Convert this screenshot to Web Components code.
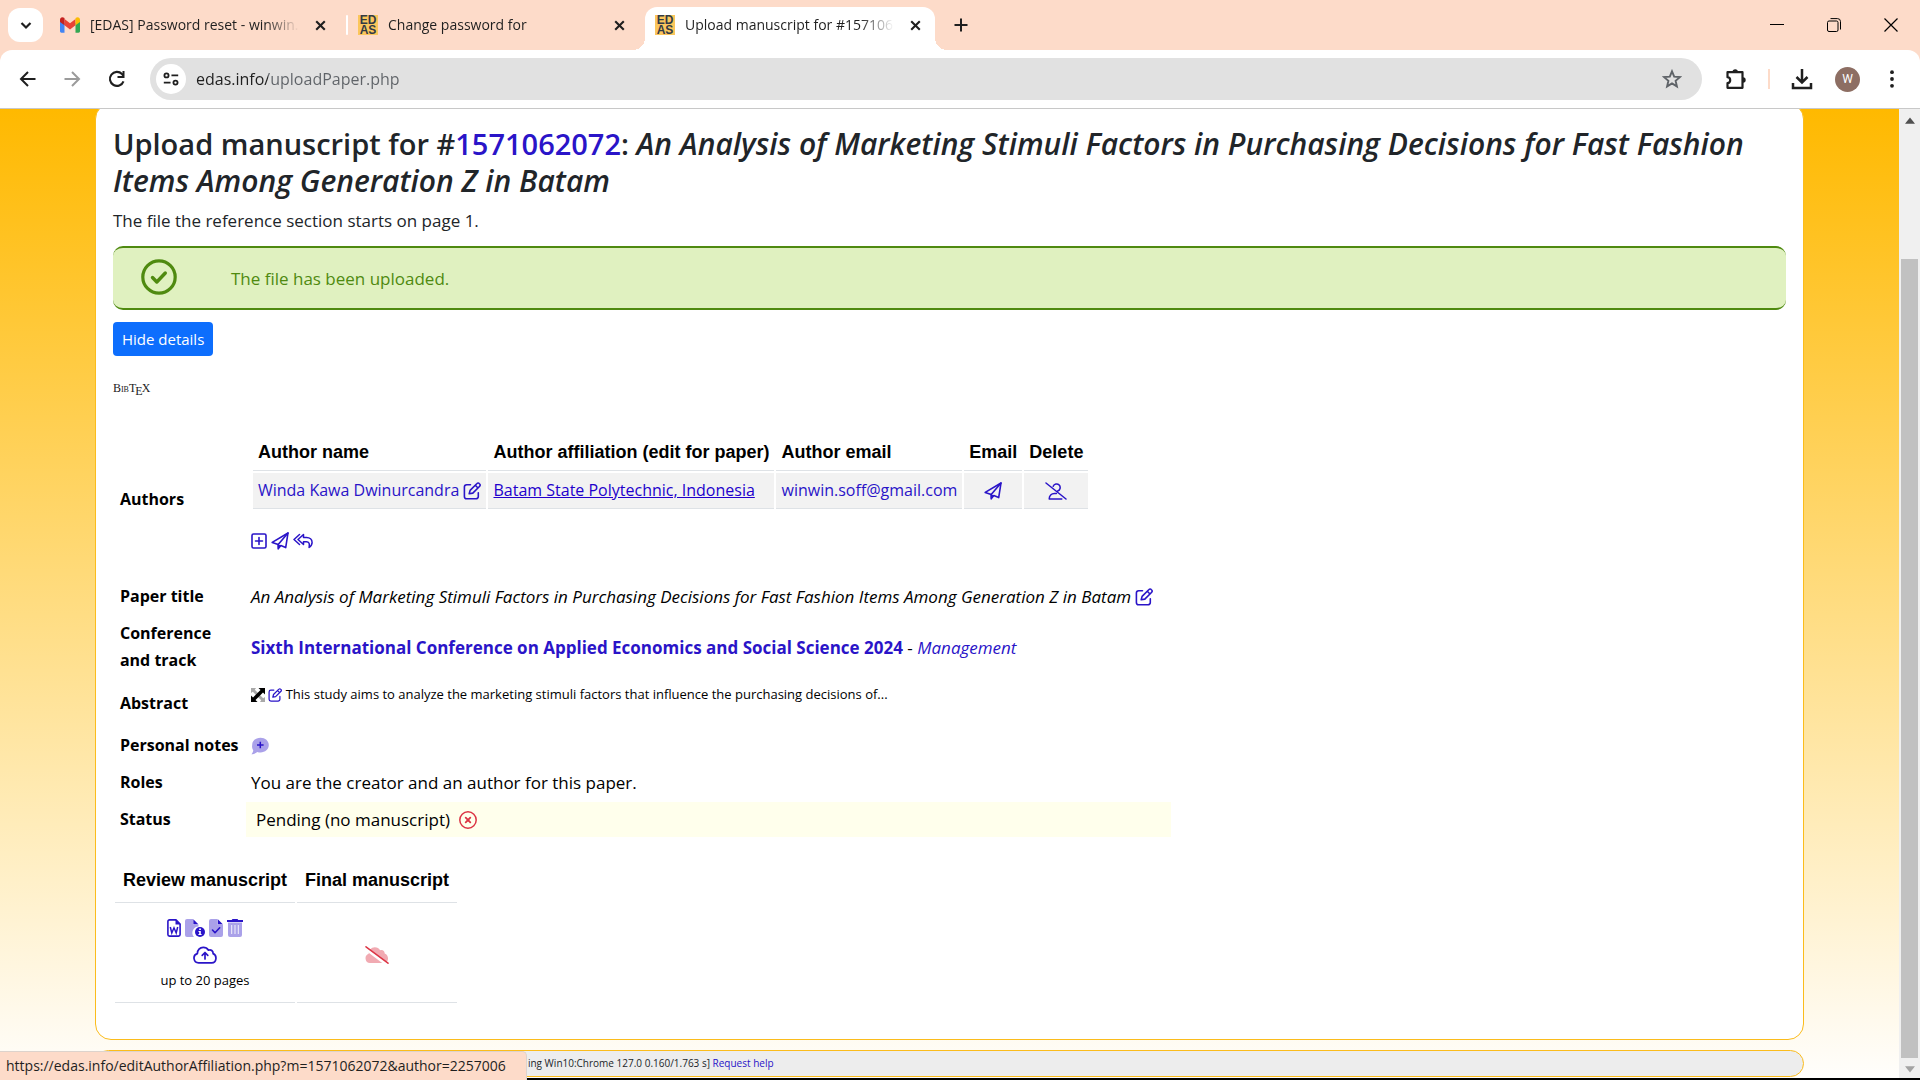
<!DOCTYPE html>
<html lang="en">
<head>
<meta charset="utf-8">
<title>Upload manuscript for #1571062072</title>
<style>
  html, body { margin: 0; height: 100%; }
  body { font-family: "Open Sans", "Noto Sans", sans-serif; font-size: 17px; line-height: 27px; color: #000; --link: #2a14c8; overflow: hidden; }
  [slot="title"] i { font-size: 30px; }
</style>
</head>
<body>
<browser-window>
  <tab-strip slot="tabs">
    <browser-tab icon="gmail" style="--tab-width: 296px">[EDAS] Password reset - winwin.</browser-tab>
    <browser-tab icon="edas" divided style="--tab-width: 299px">Change password for</browser-tab>
    <browser-tab icon="edas" active style="--tab-width: 290px">Upload manuscript for #157106</browser-tab>
  </tab-strip>
  <address-bar slot="toolbar" url="edas.info/uploadPaper.php"></address-bar>
  <paper-page>
    <span slot="title">Upload manuscript for #<paper-link>1571062072</paper-link>: <i>An Analysis of Marketing Stimuli Factors in Purchasing Decisions for Fast Fashion Items Among Generation Z in Batam</i></span>
    <status-alert>The file has been uploaded.</status-alert>
    <details-toggle>Hide details</details-toggle>
    <bibtex-link></bibtex-link>
    <detail-list>
      <detail-row label="Authors"><author-table></author-table></detail-row>
      <detail-row label="Paper title"><i>An Analysis of Marketing Stimuli Factors in Purchasing Decisions for Fast Fashion Items Among Generation Z in Batam</i> <paper-link label="Edit title"><ui-icon name="edit"></ui-icon></paper-link></detail-row>
      <detail-row label="Conference and track" wrap><b><paper-link>Sixth International Conference on Applied Economics and Social Science 2024</paper-link></b> - <i><paper-link>Management</paper-link></i></detail-row>
      <detail-row label="Abstract" small><ui-icon name="expand" size="14"></ui-icon> <paper-link label="Edit abstract"><ui-icon name="edit" size="14"></ui-icon></paper-link> This study aims to analyze the marketing stimuli factors that influence the purchasing decisions of...</detail-row>
      <detail-row label="Personal notes"><paper-link label="Add note"><ui-icon name="note"></ui-icon></paper-link></detail-row>
      <detail-row label="Roles">You are the creator and an author for this paper.</detail-row>
      <detail-row label="Status" highlight>Pending (no manuscript)&nbsp; <ui-icon name="cross"></ui-icon></detail-row>
    </detail-list>
    <manuscript-table></manuscript-table>
  </paper-page>
  <link-preview slot="preview">https://edas.info/editAuthorAffiliation.php?m=1571062072&amp;author=2257006</link-preview>
</browser-window>

<script>
const define = (name, html) => customElements.define(name, class extends HTMLElement {
  constructor() { super(); this.attachShadow({ mode: "open" }); }
  connectedCallback() {
    this.shadowRoot.innerHTML = typeof html === "function" ? html(this) : html;
  }
});

/* ---------- icons: [viewBox width, viewBox height, markup] ---------- */
const S = 'fill="none" stroke="currentColor" stroke-linecap="round" stroke-linejoin="round"';
const L = 'fill="none" stroke="currentColor" stroke-linecap="butt" stroke-linejoin="miter"';
const ICONS = {
  chevron: [20, 20, `<path ${L} stroke-width="2.2" d="M5.5 8l4.5 4.5L14.5 8"/>`],
  gmail: [20, 16, `<path fill="#4285f4" d="M0 3v11.3c0 .8.6 1.4 1.4 1.4H4.5V6z"/><path fill="#34a853" d="M20 3v11.3c0 .8-.6 1.4-1.4 1.4H15.5V6z"/><path fill="#ea4335" d="M4.5 2l5.5 4.2L15.5 2v6.3L10 12.5 4.5 8.3z"/><path fill="#c5221f" d="M0 2.5C0 .3 2.4-.7 4.5 1v7.3L0 5z"/><path fill="#fbbc04" d="M20 2.5c0-2.2-2.4-3.2-4.5-1.5v7.3L20 5z"/>`],
  close: [20, 20, `<path ${L} stroke-width="2.2" d="M5.5 5.5l9 9M14.5 5.5l-9 9"/>`],
  plus: [20, 20, `<path ${L} stroke-width="2" d="M10 3.5v13M3.5 10h13"/>`],
  back: [20, 20, `<path ${L} stroke-width="2" d="M17.500 10H3.500M10 3L3 10l7 7"/>`],
  forward: [20, 20, `<path ${L} stroke-width="2" d="M2.500 10h14M10 3l7 7-7 7"/>`],
  reload: [20, 20, `<path ${L} stroke-width="2.1" d="M17.500 12.300A7 7 0 1 1 16 5l1.300 1.500"/><path fill="currentColor" d="M18.500 2v7h-7V7h5V2z"/>`],
  tune: [20, 20, `<g ${L} stroke-width="2"><circle cx="5" cy="6" r="2.3"/><path d="M10.500 6H18M2 14h7.500"/><circle cx="15" cy="14" r="2.3"/></g>`],
  star: [20, 20, `<path ${L} stroke-width="1.9" d="M10 2.300l2.200 5.300 5.700.5-4.300 3.700 1.300 5.600-4.900-3-4.900 3 1.300-5.600L2.100 8.100l5.700-.5z"/>`],
  puzzle: [22, 22, `<path ${S} stroke-width="2.2" d="M2.500 4.200h15v15.600h-15v-4.600c3.600-.5 3.600-5.500 0-6z"/><path fill="currentColor" d="M7.500 4a2.700 2.700 0 0 1 5.400 0zM18 9.300a2.700 2.700 0 0 1 0 5.400z"/>`],
  download: [22, 22, `<path ${L} stroke-width="2.5" d="M11 1v13M5.500 9l5.500 5.500L16.500 9M2 15v5h18v-5"/>`],
  dots: [20, 20, `<g fill="currentColor"><circle cx="10" cy="3.200" r="1.900"/><circle cx="10" cy="10" r="1.900"/><circle cx="10" cy="16.800" r="1.900"/></g>`],
  minimize: [14, 14, `<path stroke="currentColor" d="M0 6.500h14"/>`],
  restore: [14, 14, `<rect x=".5" y="3" width="10.500" height="10.500" rx="1.500" fill="none" stroke="currentColor"/><path fill="none" stroke="currentColor" d="M3.500.6h7A3 3 0 0 1 13.500 3.500v8"/>`],
  quit: [14, 14, `<path stroke="currentColor" stroke-width="1.200" d="M.5.500l13 13M13.500.500l-13 13"/>`],
  check: [36, 36, `<g ${S}><circle cx="18" cy="18" r="16.200" stroke-width="3.200"/><path stroke-width="3.400" d="M11.500 18.500l4.300 4.500 8.500-9"/></g>`],
  edit: [18, 18, `<g ${S} stroke-width="1.600"><path d="M7.500 2.700H3.700A2.300 2.300 0 0 0 1.400 5v9.500a2.300 2.300 0 0 0 2.300 2.300H13a2.300 2.300 0 0 0 2.300-2.300v-3.700"/><path d="M6.200 11.800l.9-3.400 6.900-6.900a1.500 1.500 0 0 1 2.200 0l.5.500a1.500 1.500 0 0 1 0 2.200l-6.900 6.900zM12.300 3.300l2.700 2.700"/></g>`],
  send: [18, 18, `<g ${S} stroke-width="1.600"><path d="M1.200 10.400L17 1l-2.300 14.600-4.900-2.100-2.600 3.300v-4.300z"/><path d="M17 1L7.200 12.500"/></g><path fill="currentColor" d="M6.500 12l3.600 1.600L7 17.600z"/>`],
  userslash: [22, 18, `<g ${S} stroke-width="1.500"><path d="M8.200 4.300a3.600 3.600 0 1 1 4.500 4.700M4.200 16.900c0-3.300 2.200-5.400 5.200-5.400h2M4.200 16.900h12.600M1 1l20 16"/></g>`],
  addbox: [16, 16, `<g ${S} stroke-width="1.600"><rect x="1" y="1" width="14" height="14" rx="1.500"/><path d="M4.500 8h7M8 4.500v7"/></g>`],
  replyall: [20, 16, `<g ${S} stroke-width="1.500"><path d="M6.500 1.500L1 6.500l5.500 5M10.500 1.500L5 6.500l5.500 5V8.700h3c2.300 0 3.300 1.500 2.600 5.700 2-1.400 3-3 3-5 0-3-2.300-5-5.600-5h-3z"/></g>`],
  expand: [14, 14, `<path fill="#a9a9a9" d="M0 0h5L3.800 1.800l8.400 8.400L14 9v5H9l1.200-1.800-8.400-8.400L0 5z"/><path fill="#000" d="M7.500 0H14v6.500l-2-2-7.500 7.500 2 2H0V7.500l2 2L9.500 2z"/>`],
  note: [18, 18, `<path fill="#aaa1e9" d="M9.500.8c4.700 0 8.300 3.100 8.300 7.300s-3.600 7.400-8.300 7.400c-1.100 0-2.200-.2-3.200-.6C4.800 16.300 2.700 17.200.4 17.200c.9-1 1.700-2.200 1.900-3.700C1.200 12.100.8 10.100 1.200 8.100.9 3.900 4.800.8 9.500.8z"/><path ${L} stroke-width="1.500" d="M9.300 4.800v6.500M6 8h6.600"/>`],
  cross: [18, 18, `<g ${S} stroke-width="1.500"><circle cx="9" cy="9" r="8.200"/><path stroke-width="1.800" d="M6.700 6.700l4.600 4.600M11.300 6.700l-4.600 4.600"/></g>`],
  word: [14, 18, `<path ${S} stroke-width="1.600" d="M9 .9H2.500A1.600 1.600 0 0 0 .9 2.500v13a1.600 1.600 0 0 0 1.600 1.600h9a1.600 1.600 0 0 0 1.600-1.600V5z"/><path fill="currentColor" d="M8.500.5L13.500 5.500h-5z"/><path ${L} stroke-width="1.500" d="M3.300 8l1.500 6L7 8.800 9.200 14l1.500-6"/>`],
  fileinfo: [20, 18, `<path fill="#aaa1e9" d="M2 0h6v5.500h5.500v1.900A6.300 6.300 0 0 0 9 17.900H2a2 2 0 0 1-2-2V2a2 2 0 0 1 2-2z"/><path fill="currentColor" d="M8.300.3l5 5h-5z"/><circle cx="15" cy="13" r="5" fill="currentColor"/><path fill="#fff" d="M14.200 9.500h1.700v1.600h-1.700zM13.500 12h2.300v3h.8v1h-3.200v-1h.8v-2h-.7z"/>`],
  filecheck: [14, 18, `<path fill="#aaa1e9" d="M2 0h6.500v5.500H14V16a2 2 0 0 1-2 2H2a2 2 0 0 1-2-2V2a2 2 0 0 1 2-2z"/><path fill="currentColor" d="M8.800.3l5 5h-5z"/><path ${S} stroke-width="1.600" d="M3.500 11l2.500 2.700 4.700-4.900"/>`],
  trash: [16, 18, `<path fill="#aaa1e9" d="M1 3.500h14V16a2 2 0 0 1-2 2H3a2 2 0 0 1-2-2z"/><path stroke="#fff" stroke-opacity=".85" d="M4.700 6v9M8 6v9M11.300 6v9"/><path fill="currentColor" d="M0 1h4.700L5.500 0h5l.8 1H16v2H0z"/>`],
  upload: [24, 18, `<g ${S} stroke-width="1.700"><path d="M6 16.800a4.700 4.700 0 0 1-1.600-9.200C4.300 4 6.900 1.300 10.200 1.300c2.300 0 4.200 1.100 5.300 2.900 2.400-1 4.800.8 4.600 3.400 4.200 1.700 3.700 9.200-1.400 9.200z"/><path d="M12 13V7M9.200 9.300L12 6.500l2.800 2.800"/></g>`],
  cloudslash: [24, 18, `<path fill="#f1aab2" d="M5 17a4.800 4.800 0 0 1-1.300-9.300C3.600 4.500 6 1.300 9.800 1.300c2.400 0 4.300 1.100 5.300 2.900 2.600-.8 4.700.8 4.600 3.400 4.700 1.700 4.400 9.400-.8 9.400z"/><path stroke="#fff" stroke-width="3" d="M0 2l23 17.500"/><path stroke="currentColor" stroke-width="1.500" stroke-linecap="round" d="M1 .8l22 16.400"/>`],
  triup: [12, 8, `<path fill="#505050" d="M6 0.500L12 8H0z"/>`],
  tridown: [12, 8, `<path fill="#a3a3a3" d="M6 7.500L0 0h12z"/>`]
};

define("ui-icon", el => {
  const [w, h, markup] = ICONS[el.getAttribute("name")];
  const width = Number(el.getAttribute("size") || w);
  const height = Math.round(width * h / w);
  return `<style>
    :host { display: inline-block; vertical-align: middle; line-height: 0; padding-bottom: 2px; }
    :host([name="cross"]) { color: #dc3545; } :host([name="cloudslash"]) { color: #dc3545; }
    :host([flat]) { padding: 0; }
  </style><svg width="${width}" height="${height}" viewBox="0 0 ${w} ${h}" aria-hidden="true">${markup}</svg>`;
});

define("paper-link", el => `<style>
    :host { display: inline; }
    a { color: var(--link); text-decoration: none; }
    :host([underlined]) a { text-decoration: underline; color: #2200cc; }
  </style><a href="#"${el.hasAttribute("label") ? ` aria-label="${el.getAttribute("label")}"` : ""}><slot></slot></a>`);

/* ---------- browser frame ---------- */
define("browser-window", `<style>
    :host { display: flex; flex-direction: column; height: 100vh; box-sizing: border-box; border-bottom: 2px solid #000; position: relative; background: #fddbc9; }
    .bar { background: #fff; border-radius: 12px 12px 0 0; border-bottom: 1px solid #c8c8c8; }
    .view { flex: 1; min-height: 0; display: flex; background: #fff; }
    .page { flex: 1; min-width: 0; overflow: hidden; }
    .preview { position: absolute; left: 0; bottom: -2px; }
  </style>
  <slot name="tabs"></slot>
  <div class="bar"><slot name="toolbar"></slot></div>
  <div class="view"><div class="page"><slot></slot></div><page-scroller></page-scroller></div>
  <div class="preview"><slot name="preview"></slot></div>`);

define("tab-strip", `<style>
    :host { display: flex; height: 50px; align-items: center; background: #fddbc9; color: #1f1f1f; }
    button { border: 0; padding: 0; background: none; color: inherit; display: grid; place-items: center; }
    .search { width: 35px; height: 34px; margin: 0 7px 0 8px; border-radius: 12px; background: #fff; }
    .new { width: 52px; height: 34px; }
    .controls { margin-left: auto; display: flex; padding-right: 1px; color: #000; }
    .controls button { width: 57px; height: 40px; }
  </style>
  <button class="search" aria-label="Search tabs"><ui-icon flat name="chevron" size="20"></ui-icon></button>
  <slot></slot>
  <button class="new" aria-label="New tab"><ui-icon flat name="plus" size="20"></ui-icon></button>
  <div class="controls">
    <button aria-label="Minimize"><ui-icon flat name="minimize"></ui-icon></button>
    <button aria-label="Restore"><ui-icon flat name="restore"></ui-icon></button>
    <button aria-label="Close window"><ui-icon flat name="quit"></ui-icon></button>
  </div>`);

define("edas-mark", `<style>
    :host { display: grid; width: 20px; height: 20px; background: #fbc65c; color: #333a45; font: bold 12px/10px "Liberation Sans", sans-serif; text-align: center; }
    b { display: block; height: 10px; }
  </style><b>ED</b><b>AS</b>`);

define("browser-tab", el => `<style>
    :host { display: flex; width: var(--tab-width); height: 50px; box-sizing: border-box; padding: 0 15px 0 10px; align-items: center; gap: 10px; font-size: 14px; line-height: 20px; position: relative; }
    :host([divided]) { padding-left: 0; }
    :host([divided])::before { content: ""; width: 2px; height: 20px; background: #fff; border-radius: 1px; }
    :host([active]) { height: 43px; align-self: flex-end; padding: 0 9px 7px 10px; background: #fff; border-radius: 12px 12px 0 0; }
    :host([active])::before, :host([active])::after { content: ""; position: absolute; bottom: 0; width: 12px; height: 12px; }
    :host([active])::before { left: -12px; background: radial-gradient(circle at 0 0, transparent 12px, #fff 12px); }
    :host([active])::after { right: -12px; background: radial-gradient(circle at 100% 0, transparent 12px, #fff 12px); }
    .title { flex: 1; min-width: 0; overflow: hidden; white-space: nowrap; mask-image: linear-gradient(90deg, #000 calc(100% - 34px), transparent); }
    button { border: 0; padding: 0; background: none; color: inherit; width: 22px; height: 22px; display: grid; place-items: center; }
  </style>
  ${el.getAttribute("icon") === "gmail" ? '<ui-icon flat name="gmail"></ui-icon>' : "<edas-mark></edas-mark>"}
  <span class="title"><slot></slot></span>
  <button aria-label="Close tab"><ui-icon flat name="close" size="19"></ui-icon></button>`);

define("address-bar", el => `<style>
    :host { display: flex; height: 58px; align-items: center; color: #1f1f1f; }
    button { border: 0; padding: 0; background: none; color: inherit; display: grid; place-items: center; height: 36px; }
    .nav { width: 44px; } .nav:disabled { color: #9b9b9b; }
    .navs { display: flex; padding: 0 12px 0 6px; }
    .box { flex: 1; height: 42px; border-radius: 21px; background: #e1e1e1; display: flex; align-items: center; }
    .site { width: 30px; height: 30px; border-radius: 15px; background: #fff; margin: 0 10px 0 6px; }
    input { flex: 1; border: 0; outline: 0; padding: 0; font: 16px/24px "Open Sans", sans-serif; color: #5f6368; background: linear-gradient(90deg, #1f1f1f 72px, #5f6368 72px); background-clip: text; -webkit-text-fill-color: transparent; }
    .star { width: 60px; color: #5f6368; }
    .tools { display: flex; align-items: center; padding: 0 6px 0 8px; }
    .ext { width: 52px; }
    .rule { width: 2px; height: 20px; background: #fddbc9; margin: 0 6px; }
    .down { width: 52px; }
    .user { width: 25px; height: 25px; margin: 0 10px 0 7px; border-radius: 50%; background: #8d6e63; color: #fff; font: 12px/25px Roboto, sans-serif; }
  </style>
  <div class="navs">
    <button class="nav" aria-label="Back"><ui-icon flat name="back"></ui-icon></button>
    <button class="nav" aria-label="Forward" disabled><ui-icon flat name="forward"></ui-icon></button>
    <button class="nav" aria-label="Reload"><ui-icon flat name="reload"></ui-icon></button>
  </div>
  <div class="box">
    <button class="site" aria-label="Site information"><ui-icon flat name="tune" size="18"></ui-icon></button>
    <input aria-label="Address" value="${el.getAttribute("url")}">
    <button class="star" aria-label="Bookmark"><ui-icon flat name="star"></ui-icon></button>
  </div>
  <div class="tools">
    <button class="ext" aria-label="Extensions"><ui-icon flat name="puzzle"></ui-icon></button>
    <span class="rule"></span>
    <button class="down" aria-label="Downloads"><ui-icon flat name="download"></ui-icon></button>
    <button class="user" aria-label="Profile">W</button>
    <button class="nav" aria-label="Menu"><ui-icon flat name="dots"></ui-icon></button>
  </div>`);

define("page-scroller", `<style>
    :host { display: flex; flex-direction: column; width: 21px; background: #f0f0f0; align-items: center; }
    span { height: 20px; display: grid; place-items: center; padding-top: 2px; box-sizing: border-box; }
    .before { flex: 130 1 0; } .thumb { flex: 799 1 0; width: 17px; background: #c1c1c1; }
  </style><span><ui-icon flat name="triup" size="10"></ui-icon></span><div class="before"></div><div class="thumb"></div><span><ui-icon flat name="tridown" size="10"></ui-icon></span>`);

define("link-preview", `<style>
    :host { display: block; box-sizing: border-box; height: 29px; padding: 0 20px 0 6px; background: #fddbc9; border-top: 1px solid #ddd3cc; border-right: 1px solid #ddd3cc; border-radius: 0 5px 0 0; font-size: 14px; line-height: 27px; color: #1f1f1f; white-space: nowrap; }
  </style><slot></slot>`);

/* ---------- page ---------- */
define("paper-page", `<style>
    :host { display: flex; flex-direction: column; min-height: 100%; padding: 0 5%; box-sizing: border-box; background: linear-gradient(#ffb900, #fffefc); }
    main { margin-top: -6px; border: 1px solid #fbbc1c; border-radius: 16px; background: #fff; padding: 21px 17px 34px; }
    h1 { margin: 0 0 8px; font-size: 29px; line-height: 37px; font-weight: 600; color: #212529; }
    p { margin: 0 0 12px; color: #212529; }
    footer { margin-top: 10px; border: 1px solid #fbbc1c; border-radius: 14px; background: #ededed; height: 25px; font-size: 10px; line-height: 25px; padding-left: 432px; color: #212529; white-space: nowrap; }
  </style>
  <main><h1><slot name="title"></slot></h1><p>The file the reference section starts on page 1.</p><slot></slot></main>
  <footer>ing Win10:Chrome 127.0 0.160/1.763 s] <paper-link>Request help</paper-link></footer>`);

define("status-alert", `<style>
    :host { display: flex; align-items: center; box-sizing: border-box; height: 64px; padding: 0 28px; gap: 54px; color: #4f8a10; background: #e0f1c0; border: solid #4f8a10; border-width: 2px 0; border-radius: 10px; }
  </style><ui-icon name="check"></ui-icon><span><slot></slot></span>`);

define("details-toggle", `<style>
    :host { display: flex; padding: 12px 0 20px; }
    button { border: 0; border-radius: 4px; background: #0d6efd; color: #fff; height: 34px; padding: 0 9px; font: 15px/34px "Open Sans", sans-serif; }
  </style><button><slot></slot></button>`);

define("bibtex-link", `<style>
    :host { display: block; height: 45px; line-height: 20px; }
    a { color: #222; text-decoration: none; font-family: "Liberation Serif", serif; font-size: 12px; }
    small { font-size: 8px; } sub { font-size: 12px; line-height: 0; vertical-align: -3px; margin: 0 -1px; }
  </style><a href="#">B<small>IB</small>T<sub>E</sub>X</a>`);

define("detail-list", `<style>
    :host { display: flex; flex-direction: column; gap: 2px; padding: 0 2px; width: max-content; }
  </style><slot></slot>`);

define("detail-row", el => `<style>
    :host { display: grid; grid-template-columns: 129px minmax(925px, max-content); column-gap: 2px; }
    .label { font-size: 16px; font-weight: 700; padding: 4px 0 4px 5px; align-self: center; white-space: nowrap; }
    :host([wrap]) .label { white-space: normal; padding-right: 20px; }
    .value { padding: 4px 5px; display: block; align-self: center; white-space: nowrap; }
    :host([small]) .value { font-size: 13px; padding: 1px 5px 18px; }
    :host([highlight]) .value { background: #ffffec; padding: 4px 10px; }
  </style><div class="label">${el.getAttribute("label")}</div><div class="value"><slot></slot></div>`);

define("author-table", `<style>
    :host { display: block; padding: 8px 0 19px; }
    table { border-spacing: 2px; margin-bottom: 16px; }
    th, td { padding: 4px 5px; border-bottom: 1px solid #dee2e6; text-align: left; white-space: nowrap; height: 27px; }
    th { font: bold 18px/27px "Liberation Sans", sans-serif; }
    td { background: #f2f2f2; font-size: 16px; }
    .c { text-align: center; }
    .actions { display: flex; align-items: center; gap: 4px; height: 27px; }
  </style>
  <table>
    <tr><th>Author name</th><th>Author affiliation (edit for paper)</th><th>Author email</th><th>Email</th><th>Delete</th></tr>
    <tr>
      <td><paper-link>Winda Kawa Dwinurcandra</paper-link> <paper-link label="Edit author"><ui-icon name="edit"></ui-icon></paper-link></td>
      <td><paper-link underlined>Batam State Polytechnic, Indonesia</paper-link></td>
      <td><paper-link>winwin.soff@gmail.com</paper-link></td>
      <td class="c"><paper-link label="Email author"><ui-icon name="send"></ui-icon></paper-link></td>
      <td class="c"><paper-link label="Delete author"><ui-icon name="userslash"></ui-icon></paper-link></td>
    </tr>
  </table>
  <div class="actions"><paper-link label="Add author"><ui-icon name="addbox"></ui-icon></paper-link><paper-link label="Email authors"><ui-icon name="send"></ui-icon></paper-link><paper-link label="Reply to all"><ui-icon name="replyall"></ui-icon></paper-link></div>`);

define("manuscript-table", `<style>
    :host { display: block; margin-top: 20px; }
    table { border-spacing: 2px; }
    th, td { padding: 8px; border-bottom: 1px solid #dee2e6; white-space: nowrap; text-align: center; }
    th { font: bold 18px/27px "Liberation Sans", sans-serif; }
    td div { height: 27px; display: flex; justify-content: center; align-items: center; gap: 4px; font-size: 13px; }
  </style>
  <table>
    <tr><th>Review manuscript</th><th>Final manuscript</th></tr>
    <tr>
      <td>
        <div><paper-link label="Word file"><ui-icon flat name="word"></ui-icon></paper-link><paper-link label="File information"><ui-icon flat name="fileinfo"></ui-icon></paper-link><paper-link label="Check file"><ui-icon flat name="filecheck"></ui-icon></paper-link><paper-link label="Delete file"><ui-icon flat name="trash"></ui-icon></paper-link></div>
        <div><paper-link label="Upload"><ui-icon flat name="upload"></ui-icon></paper-link></div>
        <div>up to 20 pages</div>
      </td>
      <td><ui-icon flat name="cloudslash"></ui-icon></td>
    </tr>
  </table>`);
</script>
</body>
</html>
